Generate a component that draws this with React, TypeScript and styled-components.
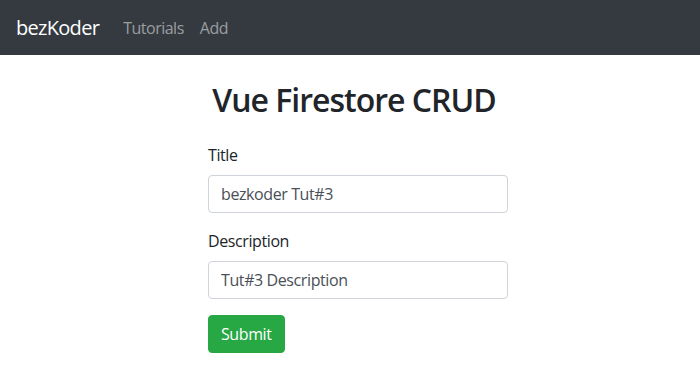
import React from 'react';
import styled, { createGlobalStyle } from 'styled-components';

const GlobalStyle = createGlobalStyle`
  * { box-sizing: border-box; }
  body {
    margin: 0;
    background: #fff;
    color: #212529;
    font-family: "Open Sans", "Noto Sans", sans-serif;
    font-size: 16px;
    line-height: 1.5;
    letter-spacing: -0.4px;
  }
`;

const Navbar = styled.nav`
  height: 55px;
  background-color: #343a40;
  display: flex;
  align-items: center;
  padding: 0 16px;
`;

const Brand = styled.a`
  color: #fff;
  font-size: 20px;
  line-height: 30px;
  margin-right: 16px;
  letter-spacing: -0.7px;
  text-decoration: none;
`;

const NavList = styled.ul`
  display: flex;
  margin: 0;
  padding: 0;
  list-style: none;
`;

const NavLink = styled.a`
  display: block;
  padding: 8px;
  color: rgba(255, 255, 255, 0.5);
  letter-spacing: -0.5px;
  text-decoration: none;
`;

const Main = styled.main`
  display: flex;
  justify-content: center;
  padding-top: 26px;
`;

const FormWrap = styled.div`
  width: 300px;
  margin-left: 16px;
`;

const Heading = styled.h2`
  margin: 0 0 24px -8px;
  text-align: center;
  font-size: 32px;
  font-weight: 600;
  letter-spacing: -1px;
  line-height: 1.2;
`;

const FormGroup = styled.div`
  margin-bottom: 16px;
`;

const Label = styled.label`
  display: block;
  margin-bottom: 8px;
`;

const Input = styled.input`
  display: block;
  width: 100%;
  height: 38px;
  padding: 6px 12px;
  font: inherit;
  letter-spacing: inherit;
  color: #495057;
  background: #fff;
  border: 1px solid #ced4da;
  border-radius: 4px;
  outline: none;
`;

const Button = styled.button<{ variant?: 'success' }>`
  height: 38px;
  padding: 6px 12px;
  font: inherit;
  letter-spacing: inherit;
  color: #fff;
  background-color: #28a745;
  border: 1px solid #28a745;
  border-radius: 4px;
`;

export default function App() {
  return (
    <>
      <GlobalStyle />
      <Navbar>
        <Brand href="#">bezKoder</Brand>
        <NavList>
          <li><NavLink href="#">Tutorials</NavLink></li>
          <li><NavLink href="#">Add</NavLink></li>
        </NavList>
      </Navbar>
      <Main>
        <FormWrap>
          <Heading>Vue Firestore CRUD</Heading>
          <FormGroup>
            <Label htmlFor="title">Title</Label>
            <Input id="title" defaultValue="bezkoder Tut#3" />
          </FormGroup>
          <FormGroup>
            <Label htmlFor="description">Description</Label>
            <Input id="description" defaultValue="Tut#3 Description" />
          </FormGroup>
          <Button variant="success">Submit</Button>
        </FormWrap>
      </Main>
    </>
  );
}
